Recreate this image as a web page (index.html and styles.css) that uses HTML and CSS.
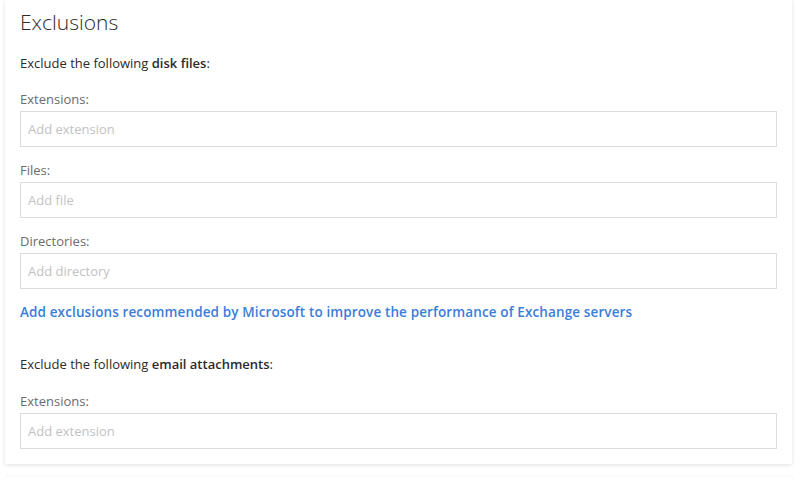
FILE: index.html
```html
<!DOCTYPE html>
<html>
<head>
<meta charset="utf-8">
<link rel="stylesheet" href="styles.css">
</head>
<body>
<div class="page">
  <section class="card">
    <h2 class="title">Exclusions</h2>
    <p class="lead">Exclude the following <b>disk files</b>:</p>
    <div class="field">
      <label class="label">Extensions:</label>
      <input class="input" type="text" placeholder="Add extension">
    </div>
    <div class="field">
      <label class="label">Files:</label>
      <input class="input" type="text" placeholder="Add file">
    </div>
    <div class="field">
      <label class="label">Directories:</label>
      <input class="input" type="text" placeholder="Add directory">
    </div>
    <a class="link" href="#">Add exclusions recommended by Microsoft to improve the performance of Exchange servers</a>
    <p class="lead lead-2">Exclude the following <b>email attachments</b>:</p>
    <div class="field">
      <label class="label">Extensions:</label>
      <input class="input" type="text" placeholder="Add extension">
    </div>
  </section>
  <section class="card card-next"></section>
</div>
</body>
</html>
```
FILE: styles.css
```css
html, body {
  margin: 0;
  padding: 0;
  background: #fff;
}
body {
  font-family: "Open Sans", "Lato", sans-serif;
  color: #2b2b2b;
  font-size: 13px;
}
.page {
  display: flex;
  flex-direction: column;
  gap: 13px;
  padding: 0 14px 0 5px;
}
.card {
  background: #fff;
  box-shadow: 0 1px 4px rgba(0, 0, 0, 0.12);
  padding: 7px 15px 15px;
  display: flex;
  flex-direction: column;
}
.card-next {
  height: 2px;
  padding: 0;
}
.title {
  margin: 0;
  font-weight: 300;
  font-size: 21px;
  line-height: 30px;
  color: #2b2b2b;
}
.lead {
  margin: 16px 0 0;
  line-height: 20px;
}
.lead b {
  font-weight: 600;
}
.lead-2 {
  margin-top: 32px;
}
.field {
  display: flex;
  flex-direction: column;
  gap: 2px;
  margin-top: 13px;
}
.lead + .field {
  margin-top: 16px;
}
.lead-2 + .field {
  margin-top: 17px;
}
.label {
  line-height: 20px;
  color: #6b6b6b;
}
.input {
  box-sizing: border-box;
  height: 36px;
  width: 100%;
  margin: 0;
  border: 1px solid #dcdcdc;
  padding: 0 7px;
  font-family: inherit;
  font-size: 13px;
  color: #333;
  outline: none;
}
.input::placeholder {
  color: #c2c2c2;
}
.link {
  margin-top: 13px;
  line-height: 20px;
  color: #3b7dd8;
  text-decoration: none;
  font-weight: 600;
  font-size: 13.5px;
  letter-spacing: 0.12px;
}
```
